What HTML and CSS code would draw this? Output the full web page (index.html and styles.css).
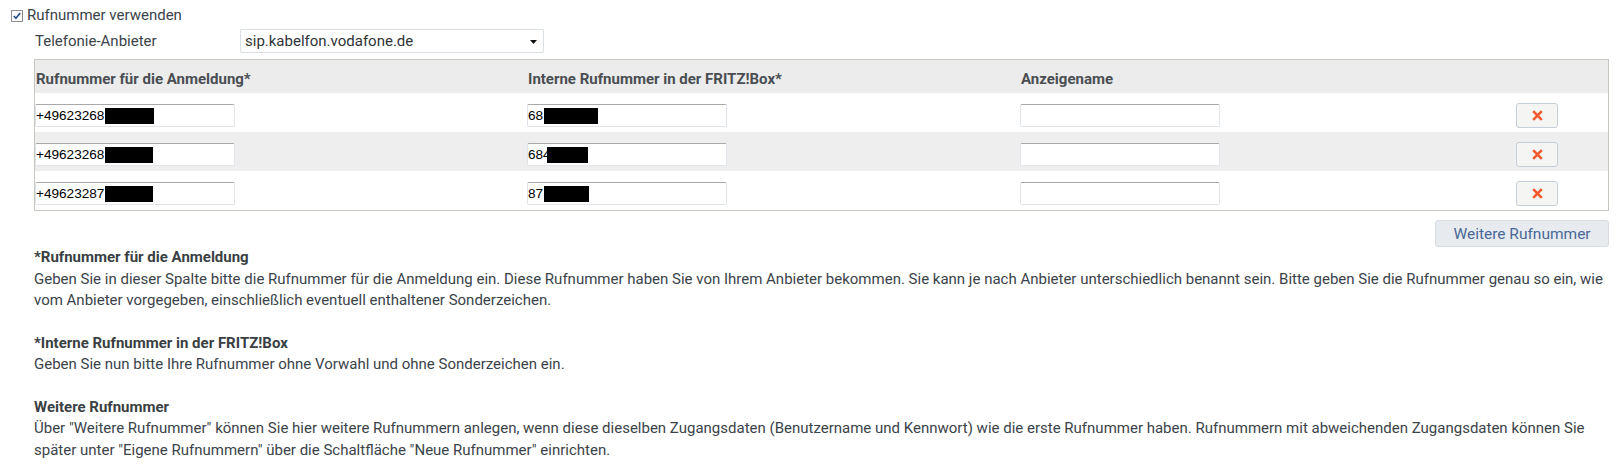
FILE: index.html
```html
<!DOCTYPE html>
<html lang="de">
<head>
<meta charset="utf-8">
<title>Rufnummer</title>
<link rel="stylesheet" href="styles.css">
</head>
<body>
<div class="page">
  <label class="use-row">
    <span class="cb">
      <svg width="12" height="12" viewBox="0 0 12 12"><rect x="0.5" y="0.5" width="11" height="11" fill="#fdfdfd" stroke="#8b8d92"/><path d="M2.8 6 L4.9 8.3 L9.2 3" fill="none" stroke="#2b4d8c" stroke-width="1.7"/></svg>
    </span>
    <span>Rufnummer verwenden</span>
  </label>

  <div class="section">
    <div class="provider-row">
      <span class="provider-label">Telefonie-Anbieter</span>
      <div class="select">
        <span class="select-value">sip.kabelfon.vodafone.de</span>
        <svg class="select-arrow" width="7" height="4" viewBox="0 0 7 4"><path d="M0 0 H7 L3.5 4 Z" fill="#111"/></svg>
      </div>
    </div>

    <div class="numbers">
      <div class="grid head">
        <div class="hcell">Rufnummer für die Anmeldung*</div>
        <div class="hcell">Interne Rufnummer in der FRITZ!Box*</div>
        <div class="hcell">Anzeigename</div>
        <div class="hcell"></div>
      </div>
      <div class="grid row">
        <div class="cell"><div class="field">+49623268<span class="redact w49"></span></div></div>
        <div class="cell"><div class="field">68<span class="redact w54"></span></div></div>
        <div class="cell"><div class="field"></div></div>
        <div class="cell"><button class="del" type="button"><svg width="11" height="11" viewBox="0 0 11 11"><path d="M1.2 1.2 L9.8 9.8 M9.8 1.2 L1.2 9.8" stroke="#f4592f" stroke-width="2.6"/></svg></button></div>
      </div>
      <div class="grid row alt">
        <div class="cell"><div class="field">+49623268<span class="redact w48"></span></div></div>
        <div class="cell"><div class="field">684<span class="redact w41 over"></span></div></div>
        <div class="cell"><div class="field"></div></div>
        <div class="cell"><button class="del" type="button"><svg width="11" height="11" viewBox="0 0 11 11"><path d="M1.2 1.2 L9.8 9.8 M9.8 1.2 L1.2 9.8" stroke="#f4592f" stroke-width="2.6"/></svg></button></div>
      </div>
      <div class="grid row">
        <div class="cell"><div class="field">+49623287<span class="redact w48"></span></div></div>
        <div class="cell"><div class="field">87<span class="redact w45"></span></div></div>
        <div class="cell"><div class="field"></div></div>
        <div class="cell"><button class="del" type="button"><svg width="11" height="11" viewBox="0 0 11 11"><path d="M1.2 1.2 L9.8 9.8 M9.8 1.2 L1.2 9.8" stroke="#f4592f" stroke-width="2.6"/></svg></button></div>
      </div>
    </div>

    <div class="actions">
      <button class="more" type="button">Weitere Rufnummer</button>
    </div>

    <div class="help">
      <p><strong>*Rufnummer für die Anmeldung</strong><br>Geben Sie in dieser Spalte bitte die Rufnummer für die Anmeldung ein. Diese Rufnummer haben Sie von Ihrem Anbieter bekommen. Sie kann je nach Anbieter unterschiedlich benannt sein. Bitte geben Sie die Rufnummer genau so ein, wie vom Anbieter vorgegeben, einschließlich eventuell enthaltener Sonderzeichen.</p>
      <p><strong>*Interne Rufnummer in der FRITZ!Box</strong><br>Geben Sie nun bitte Ihre Rufnummer ohne Vorwahl und ohne Sonderzeichen ein.</p>
      <p><strong>Weitere Rufnummer</strong><br>Über "Weitere Rufnummer" können Sie hier weitere Rufnummern anlegen, wenn diese dieselben Zugangsdaten (Benutzername und Kennwort) wie die erste Rufnummer haben. Rufnummern mit abweichenden Zugangsdaten können Sie später unter "Eigene Rufnummern" über die Schaltfläche "Neue Rufnummer" einrichten.</p>
    </div>
  </div>
</div>
</body>
</html>
```
FILE: styles.css
```css
html, body {
  margin: 0;
  padding: 0;
  background: #ffffff;
}
body {
  font-family: Roboto, "Liberation Sans", sans-serif;
  font-size: 15px;
  color: #3b434a;
}
.page {
  padding: 5px 8px 0 8px;
}
.use-row {
  display: flex;
  align-items: center;
  height: 21px;
  line-height: 21px;
}
.cb {
  display: inline-flex;
  width: 12px;
  height: 12px;
  margin: 1px 4px 0 3px;
}
.section {
  margin-left: 26px;
}
.provider-row {
  display: flex;
  align-items: center;
  margin-top: 3px;
  height: 24px;
}
.provider-label {
  width: 206px;
  padding-left: 1px;
  box-sizing: border-box;
}
.select {
  position: relative;
  display: flex;
  align-items: center;
  width: 304px;
  height: 24px;
  box-sizing: border-box;
  border: 1px solid #d9dfe4;
  border-radius: 2px;
  padding-left: 4px;
  color: #2f3338;
  background: #fff;
}
.select-arrow {
  position: absolute;
  right: 6px;
  top: 10px;
}
.numbers {
  margin-top: 6px;
  margin-right: 3px;
  border: 1px solid #c7c7c0;
}
.grid {
  display: grid;
  grid-template-columns: 492px 493px 496px 1fr;
}
.head {
  background: #ececec;
  height: 33px;
  box-sizing: border-box;
  padding-top: 9px;
  line-height: 21px;
  font-weight: 700;
  color: #4a4e52;
}
.hcell {
  padding-left: 1px;
}
.row {
  height: 39px;
  box-sizing: border-box;
  padding-top: 10px;
  background: #ffffff;
}
.row.alt {
  background: #eeeeee;
}
.field {
  width: 200px;
  height: 23px;
  margin-top: 1px;
  box-sizing: border-box;
  background: #fff;
  border: 1px solid #dfe5ea;
  border-top-color: #a9a9a9;
  border-radius: 2px;
  display: flex;
  align-items: center;
  font-family: "Liberation Sans", Arial, sans-serif;
  font-size: 13.6px;
  color: #000;
  white-space: nowrap;
  overflow: hidden;
}
.redact {
  display: inline-block;
  height: 16px;
  background: #000;
  margin-left: 1px;
}
.redact.over { margin-left: -4px; }
.w49 { width: 49px; }
.w48 { width: 48px; }
.w54 { width: 54px; }
.w45 { width: 45px; }
.w41 { width: 41px; }
.del {
  width: 42px;
  height: 25px;
  box-sizing: border-box;
  border: 1px solid #c3ced8;
  border-radius: 3px;
  background: #f5f5f4;
  display: flex;
  align-items: center;
  justify-content: center;
  padding: 0;
  cursor: pointer;
}
.actions {
  display: flex;
  justify-content: flex-end;
  margin-top: 9px;
  margin-right: 3px;
}
.more {
  width: 174px;
  height: 27px;
  box-sizing: border-box;
  border: 1px solid #d6dce2;
  border-radius: 3px;
  background: #e7ebef;
  color: #4a6896;
  font-family: Roboto, "Liberation Sans", sans-serif;
  font-size: 15.5px;
  padding: 0;
}
.help {
  line-height: 21.5px;
}
.help p {
  margin: 0 0 21px 0;
}
.help strong {
  font-weight: 700;
  color: #3a3f44;
}
```
